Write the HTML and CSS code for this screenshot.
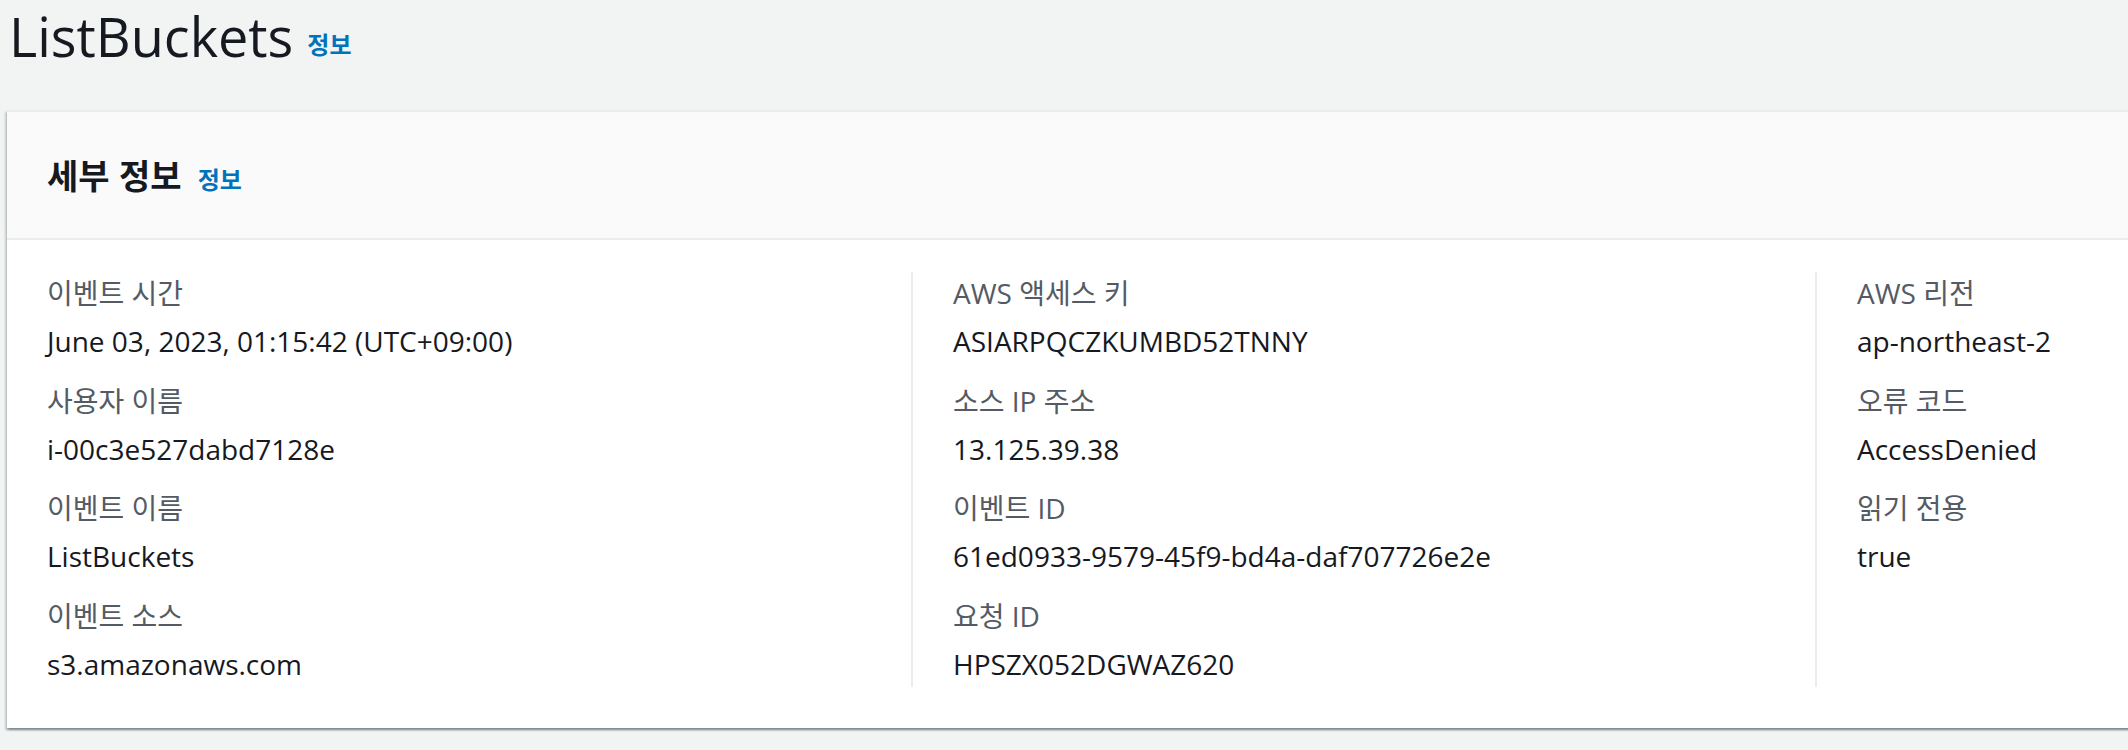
FILE: index.html
```html
<!DOCTYPE html>
<html lang="ko">
<head>
<meta charset="utf-8">
<title>ListBuckets</title>
<link rel="stylesheet" href="styles.css">
</head>
<body>
<div class="page">
  <div class="page-head">
    <h1 class="page-title">ListBuckets</h1>
    <a class="info info-title" href="#">정보</a>
  </div>
  <section class="card">
    <header class="card-head">
      <h2 class="card-title">세부 정보</h2>
      <a class="info" href="#">정보</a>
    </header>
    <div class="card-body">
      <div class="col">
        <div class="kv"><div class="k">이벤트 시간</div><div class="v">June 03, 2023, 01:15:42 (UTC+09:00)</div></div>
        <div class="kv"><div class="k">사용자 이름</div><div class="v">i-00c3e527dabd7128e</div></div>
        <div class="kv"><div class="k">이벤트 이름</div><div class="v">ListBuckets</div></div>
        <div class="kv"><div class="k">이벤트 소스</div><div class="v">s3.amazonaws.com</div></div>
      </div>
      <div class="col col-div">
        <div class="kv"><div class="k">AWS 액세스 키</div><div class="v">ASIARPQCZKUMBD52TNNY</div></div>
        <div class="kv"><div class="k">소스 IP 주소</div><div class="v">13.125.39.38</div></div>
        <div class="kv"><div class="k">이벤트 ID</div><div class="v">61ed0933-9579-45f9-bd4a-daf707726e2e</div></div>
        <div class="kv"><div class="k">요청 ID</div><div class="v">HPSZX052DGWAZ620</div></div>
      </div>
      <div class="col col-div">
        <div class="kv"><div class="k">AWS 리전</div><div class="v">ap-northeast-2</div></div>
        <div class="kv"><div class="k">오류 코드</div><div class="v">AccessDenied</div></div>
        <div class="kv"><div class="k">읽기 전용</div><div class="v">true</div></div>
      </div>
    </div>
  </section>
</div>
</body>
</html>
```
FILE: styles.css
```css
html, body {
  margin: 0;
  padding: 0;
  background: #f2f3f3;
  overflow: hidden;
}
body {
  font-family: "Open Sans", "Noto Sans CJK KR", sans-serif;
  color: #16191f;
  width: 2128px;
  height: 750px;
}
.page {
  padding-left: 7px;
}
.page-head {
  display: flex;
  align-items: baseline;
  height: 72px;
}
.page-title {
  margin: 0 0 0 2px;
  font-size: 54px;
  font-weight: 400;
  line-height: 72px;
  color: #16191f;
}
.info {
  font-family: "Noto Sans CJK KR", sans-serif;
  font-size: 24px;
  font-weight: 700;
  color: #0073bb;
  text-decoration: none;
  line-height: 32px;
}
.info-title {
  margin-left: 14px;
  position: relative;
  top: -3px;
}
.card {
  margin-top: 38px;
  margin-right: -40px;
  background: #fff;
  border-top: 2px solid #eaeded;
  box-shadow: 0 2px 2px 0 rgba(0, 28, 36, 0.3), 2px 2px 2px 0 rgba(0, 28, 36, 0.15), -2px 2px 2px 0 rgba(0, 28, 36, 0.15);
}
.card-head {
  display: flex;
  align-items: baseline;
  background: #fafafa;
  padding: 40px 40px;
  border-bottom: 2px solid #eaeded;
}
.card-title {
  margin: 0;
  font-family: "Noto Sans CJK KR", sans-serif;
  font-size: 34px;
  font-weight: 700;
  line-height: 46px;
  color: #16191f;
}
.card-head .info {
  margin-left: 16px;
}
.card-body {
  display: grid;
  grid-template-columns: repeat(3, 904px);
  padding: 32px 0 41px;
}
.col {
  padding: 1px 0 3px 40px;
  display: flex;
  flex-direction: column;
  gap: 19.5px;
}
.col-div {
  border-left: 2px solid #eaeded;
  padding-left: 40px;
}
.k {
  font-size: 28px;
  line-height: 40px;
  color: #545b64;
  margin-bottom: 8px;
}
.v {
  font-size: 28px;
  line-height: 40px;
  color: #16191f;
}
```
